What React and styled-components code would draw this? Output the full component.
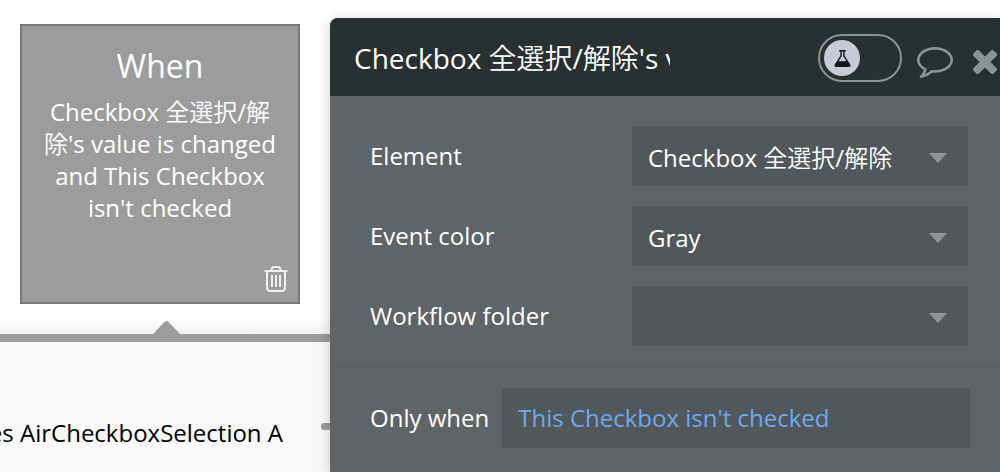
import React, { useState } from "react";
import styled, { createGlobalStyle } from "styled-components";

const GlobalStyle = createGlobalStyle`
  * { box-sizing: border-box; }
  body {
    margin: 0;
    background: #ffffff;
    font-family: "Open Sans", "Noto Sans CJK JP DemiLight", "Noto Sans CJK JP", sans-serif;
    font-size: 24px;
    line-height: 32px;
  }
  button, input, select { font: inherit; margin: 0; }
`;

const Page = styled.div`
  display: grid;
  grid-template-columns: 33fr 67fr;
  min-height: 100vh;
  overflow: hidden;
`;

const Canvas = styled.main`
  display: flex;
  flex-direction: column;
  min-width: 0;
  padding-top: 24px;
`;

const EventCard = styled.article`
  display: flex;
  flex-direction: column;
  width: 280px;
  min-height: 280px;
  margin-left: 20px;
  padding: 20px 20px 9px;
  background: #9c9c9c;
  border: 2px solid #767676;
  color: #ffffff;
  text-align: center;
`;

const EventTitle = styled.h2`
  margin: 0 0 10px;
  font-size: 32px;
  line-height: 40px;
  font-weight: 400;
`;

const EventText = styled.p`
  margin: 0;
`;

const IconButton = styled.button`
  display: flex;
  flex: none;
  padding: 0;
  border: 0;
  background: none;
  color: ${(p) => p.$color};
  cursor: pointer;
`;

const CardFooter = styled.footer`
  display: flex;
  justify-content: flex-end;
  margin: auto -10px 0 0;
`;

const Pointer = styled.div`
  display: flex;
  align-items: flex-end;
  height: 30px;
  padding-left: 153px;
  background: linear-gradient(#ffffff, #fdfdfd 50%, #f2f2f2);
`;

const ActionStrip = styled.section`
  display: flex;
  flex: 1;
  align-items: flex-start;
  justify-content: flex-end;
  gap: 38px;
  padding-top: 75px;
  overflow: hidden;
  border-top: 8px solid #9c9c9c;
  background: #f8f8f8;
  color: #000000;
  white-space: nowrap;
`;

const ActionName = styled.span`
  flex: none;
`;

const Connector = styled.span`
  flex: none;
  width: 9px;
  height: 7px;
  margin-top: 6px;
  border-radius: 3px 0 0 3px;
  background: #9c9c9c;
`;

const Panel = styled.aside`
  position: relative;
  min-width: 0;
  margin-top: 18px;
  border-top-left-radius: 8px;
  background: #5f6467;
  box-shadow: 0 2px 14px rgba(0, 0, 0, 0.2);
  color: #ffffff;
`;

const PanelHeader = styled.header`
  display: flex;
  align-items: center;
  height: 78px;
  padding: 2px 3px 0 24px;
  border-top-left-radius: 8px;
  background: #293032;
`;

const TitleInput = styled.input`
  flex: 1;
  min-width: 0;
  height: 48px;
  margin-right: 148px;
  padding: 0 0 2px;
  border: 0;
  outline: 0;
  background: none;
  color: #ffffff;
  font-size: 28px;
`;

const HeaderTools = styled.div`
  display: flex;
  flex: none;
  align-items: center;
`;

const Toggle = styled.label`
  display: flex;
  align-items: center;
  width: 84px;
  height: 48px;
  margin-right: 15px;
  padding: 0 4px;
  border: 2px solid #8b9396;
  border-radius: 24px;
  cursor: pointer;
`;

const ToggleInput = styled.input`
  appearance: none;
  width: 0;
  height: 0;
`;

const Knob = styled.span`
  display: grid;
  place-items: center;
  width: 36px;
  height: 36px;
  margin-left: ${(p) => (p.$on ? "36px" : "0")};
  border-radius: 50%;
  background: #c6cbd5;
  color: #101516;
`;

const Fields = styled.div`
  display: grid;
  gap: 20px;
  padding: 30px 32px 20px 40px;
  border-bottom: 1px solid #585d60;
`;

const Field = styled.div`
  display: grid;
  grid-template-columns: 262fr 336fr;
  align-items: center;
`;

const Label = styled.label`
  white-space: nowrap;
`;

const SelectBox = styled.div`
  display: grid;
  grid-template-columns: 1fr auto;
  align-items: center;
  background: #525759;
  color: #8f9597;
`;

const Select = styled.select`
  grid-area: 1 / 1 / 2 / 3;
  width: 100%;
  height: 60px;
  padding: 4px 56px 0 16px;
  border: 0;
  border-radius: 0;
  outline: 0;
  appearance: none;
  background: none;
  color: #ffffff;
`;

const Caret = styled.svg`
  grid-area: 1 / 2 / 2 / 3;
  margin: 4px 21px 0 0;
  pointer-events: none;
`;

const Condition = styled.div`
  display: flex;
  align-items: center;
  gap: 13px;
  padding: 21px 30px 24px 40px;
`;

const Expression = styled.button`
  flex: 1;
  min-width: 0;
  height: 60px;
  padding: 0 16px;
  border: 0;
  background: #525759;
  color: #6aaaf0;
  text-align: left;
  cursor: pointer;
`;

const FIELDS = [
  { id: "element", label: "Element", options: ["Checkbox 全選択/解除"] },
  { id: "event-color", label: "Event color", options: ["Gray"] },
  { id: "workflow-folder", label: "Workflow folder", options: [""] },
];

function TrashIcon() {
  return (
    <svg width="24" height="28" viewBox="0 0 24 28" fill="none" stroke="currentColor" strokeWidth="2" aria-hidden="true">
      <path d="M0.500 6h23" />
      <path d="M7 6Q7.500 2 10 2h4q2.500 0 3 4" />
      <path d="M3 6v17q0 3 3 3h12q3 0 3-3V6" />
      <path d="M8 10v12M12 10v12M16 10v12" />
    </svg>
  );
}

function FlaskIcon() {
  return (
    <svg width="17" height="17" viewBox="128 128 1536 1536" fill="currentColor" aria-hidden="true">
      <path d="M1591 1448q56 89 21.500 152.500t-140.500 63.500h-1152q-106 0-140.500-63.500t21.500-152.500l503-793v-399h-64q-26 0-45-19t-19-45 19-45 45-19h512q26 0 45 19t19 45-19 45-45 19h-64v399zm-779-725l-272 429h712l-272-429-20-31v-436h-128v436z" />
    </svg>
  );
}

function CommentIcon() {
  return (
    <svg width="36" height="31" viewBox="0 256 1792 1536" fill="currentColor" aria-hidden="true">
      <path d="M896 384q-204 0-381.500 69.500t-282 187.500-104.500 255q0 112 71.500 213.500t201.500 175.500l87 50-27 96q-24 91-70 172 152-63 275-171l43-38 57 6q69 8 130 8 204 0 381.500-69.500t282-187.500 104.500-255-104.500-255-282-187.500-381.500-69.500zm896 512q0 174-120 321.500t-326 233-450 85.500q-70 0-145-8-198 175-460 242-49 14-114 22h-5q-15 0-27-10.500t-16-27.500v-1q-3-4-.5-12t2-10 4.500-9.500l6-9 7-8.500 8-9q7-8 31-34.500t34.500-38 31-39.500 32.500-51 27-59 26-76q-157-89-247.500-220t-90.500-281q0-174 120-321.500t326-233 450-85.500 450 85.500 326 233 120 321.500z" />
    </svg>
  );
}

function CloseIcon() {
  return (
    <svg width="24" height="24" viewBox="302 366 1188 1188" fill="currentColor" aria-hidden="true">
      <path d="M1490 1322q0 40-28 68l-136 136q-28 28-68 28t-68-28l-294-294-294 294q-28 28-68 28t-68-28l-136-136q-28-28-28-68t28-68l294-294-294-294q-28-28-28-68t28-68l136-136q28-28 68-28t68 28l294 294 294-294q28-28 68-28t68 28l136 136q28 28 28 68t-28 68l-294 294 294 294q28 28 28 68z" />
    </svg>
  );
}

const HeaderButton = styled(IconButton)`
  padding-top: 8px;
`;

const Actions = styled.div`
  display: flex;
  align-items: center;
  gap: 20px;
`;

export default function App() {
  const [title, setTitle] = useState("Checkbox 全選択/解除's value is changed");
  const [on, setOn] = useState(false);

  return (
    <Page>
      <GlobalStyle />
      <Canvas>
        <EventCard>
          <EventTitle>When</EventTitle>
          <EventText>
            Checkbox 全選択/解除's value is changed and This Checkbox isn't checked
          </EventText>
          <CardFooter>
            <IconButton type="button" $color="#f0f0f0" aria-label="Delete event">
              <TrashIcon />
            </IconButton>
          </CardFooter>
        </EventCard>
        <Pointer>
          <svg width="27" height="14" viewBox="0 0 27 14" aria-hidden="true">
            <path d="M0 14L11.500 2Q13.500 0 15.500 2L27 14z" fill="#9c9c9c" />
          </svg>
        </Pointer>
        <ActionStrip>
          <ActionName>es AirCheckboxSelection A</ActionName>
          <Connector />
        </ActionStrip>
      </Canvas>

      <Panel>
        <PanelHeader>
          <TitleInput aria-label="Event name" value={title} onChange={(e) => setTitle(e.target.value)} />
          <HeaderTools>
            <Toggle>
              <ToggleInput
                type="checkbox"
                aria-label="Experimental mode"
                checked={on}
                onChange={(e) => setOn(e.target.checked)}
              />
              <Knob $on={on}>
                <FlaskIcon />
              </Knob>
            </Toggle>
            <Actions>
              <HeaderButton type="button" $color="#8b9396" aria-label="Comment">
                <CommentIcon />
              </HeaderButton>
              <HeaderButton type="button" $color="#8b9396" aria-label="Close">
                <CloseIcon />
              </HeaderButton>
            </Actions>
          </HeaderTools>
        </PanelHeader>
        <Fields>
          {FIELDS.map((field) => (
            <Field key={field.id}>
              <Label htmlFor={field.id}>{field.label}</Label>
              <SelectBox>
                <Select id={field.id}>
                  {field.options.map((option) => (
                    <option key={option}>{option}</option>
                  ))}
                </Select>
                <Caret width="18" height="10" viewBox="0 0 18 10" aria-hidden="true">
                  <path d="M0 0h18L9 10z" fill="currentColor" />
                </Caret>
              </SelectBox>
            </Field>
          ))}
        </Fields>
        <Condition>
          <Label htmlFor="only-when">Only when</Label>
          <Expression id="only-when" type="button">
            This Checkbox isn't checked
          </Expression>
        </Condition>
      </Panel>
    </Page>
  );
}
